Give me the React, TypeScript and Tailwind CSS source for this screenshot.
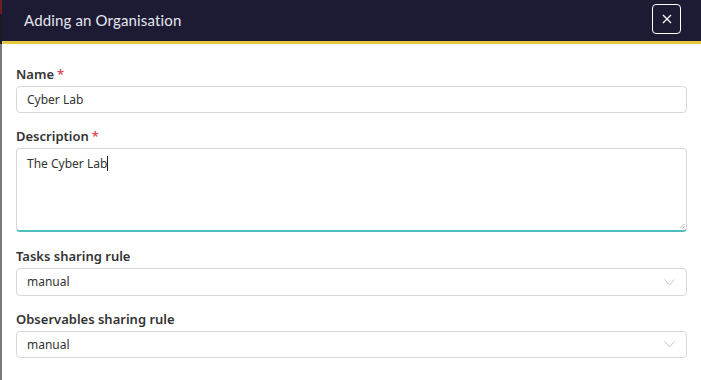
import React from 'react'

function Label({ text, required }: { text: string; required?: boolean }) {
  return (
    <label className="block text-[13px] font-semibold text-[#333] leading-[16px] mb-[4px]">
      {text}
      {required && <span className="text-[#e0455a] ml-[3px]">*</span>}
    </label>
  )
}

function SelectBox({ value, h }: { value: string; h: string }) {
  return (
    <div className={`${h} border border-[#d8d8d8] rounded-[4px] flex items-center justify-between pl-[10px] pr-[11px] text-[12px] text-[#333]`}>
      <span>{value}</span>
      <svg width="11" height="7" viewBox="0 0 11 7" fill="none" stroke="#c4c4c4" strokeWidth="1">
        <path d="M0.5 0.5 L5.5 6 L10.5 0.5" />
      </svg>
    </div>
  )
}

export default function App() {
  return (
    <div className="w-[701px] h-[380px] flex bg-white overflow-hidden" style={{ fontFamily: '"Noto Sans", sans-serif' }}>
      {/* page peeking behind the modal */}
      <div className="w-[2px] flex flex-col bg-[#7a7a7a]">
        <div className="h-[14px] bg-[#6e1d1d]" />
        <div className="h-[30px] bg-[#1a1a24]" />
      </div>

      <div className="flex-1 flex flex-col">
        {/* Header */}
        <div className="h-[44px] bg-[#1c1b33] border-b-[3px] border-[#e6c93f] flex items-center justify-between pl-[22px] pr-[20px]">
          <h1 className="text-[15px] text-[#e4e7f0] tracking-[0.15px]" style={{ fontFamily: 'Lato, "Noto Sans", sans-serif' }}>
            Adding an Organisation
          </h1>
          <button className="w-[29px] h-[30px] border border-white rounded-[4px] flex items-center justify-center -mt-[3px]">
            <svg width="10" height="10" viewBox="0 0 10 10" stroke="white" strokeWidth="1.4">
              <path d="M1 1 L9 9 M9 1 L1 9" />
            </svg>
          </button>
        </div>

        {/* Body */}
        <div className="pl-[14px] pr-[14px] pt-[22px]">
          <Label text="Name" required />
          <div className="h-[27px] border border-[#d8d8d8] rounded-[4px] flex items-center pl-[10px] text-[12px] text-[#333]">
            Cyber Lab
          </div>

          <div className="mt-[15px]">
            <Label text="Description" required />
            <div className="relative h-[84px] border border-[#d8d8d8] border-b-[2px] border-b-[#4dbdbd] rounded-[4px] pl-[10px] pt-[6px] text-[12px] text-[#333]">
              <span>The Cyber Lab</span>
              <span className="inline-block w-[1px] h-[15px] bg-[#222] align-middle -mt-[2px]" />
              <svg className="absolute right-[1px] bottom-[1px]" width="6" height="6" viewBox="0 0 6 6" stroke="#999" strokeWidth="0.8">
                <path d="M5.5 1 L1 5.5 M5.5 3.5 L3.5 5.5" />
              </svg>
            </div>
          </div>

          <div className="mt-[16px]">
            <Label text="Tasks sharing rule" />
            <SelectBox value="manual" h="h-[28px]" />
          </div>

          <div className="mt-[15px]">
            <Label text="Observables sharing rule" />
            <SelectBox value="manual" h="h-[27px]" />
          </div>
        </div>
      </div>
    </div>
  )
}
